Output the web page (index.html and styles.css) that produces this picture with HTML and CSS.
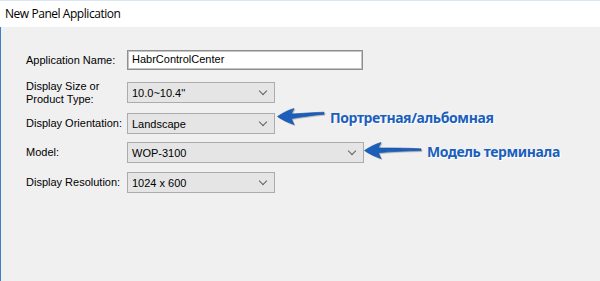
FILE: index.html
```html
<!DOCTYPE html>
<html>
<head>
<meta charset="utf-8">
<link rel="stylesheet" href="styles.css">
</head>
<body>
<div class="window">
  <div class="titlebar">New Panel Application</div>
  <div class="client">
    <div class="form">
      <div class="row r1">
        <div class="label">Application Name:</div>
        <div class="textbox">HabrControlCenter</div>
      </div>
      <div class="row r2">
        <div class="label">Display Size or<br>Product Type:</div>
        <div class="combo short"><span>10.0~10.4''</span><i class="chev"></i></div>
      </div>
      <div class="row r3">
        <div class="label">Display Orientation:</div>
        <div class="combo short"><span>Landscape</span><i class="chev"></i></div>
      </div>
      <div class="row r4">
        <div class="label">Model:</div>
        <div class="combo long"><span>WOP-3100</span><i class="chev"></i></div>
      </div>
      <div class="row r5">
        <div class="label">Display Resolution:</div>
        <div class="combo short"><span>1024 x 600</span><i class="chev"></i></div>
      </div>
    </div>

    <div class="note n1">
      <svg class="arrow" width="48" height="20" viewBox="0 0 48 20">
        <path d="M0.5 9.5 C5 6.5 11 3 17 1.5 C16 3.5 15 5 14.5 7 C24 6.5 36 5.5 47 5.2 L47 7.2 C36 8 24 10 14.5 11.5 C15 13.5 16 15.5 17 17.5 C11 15.5 5 12.5 0.5 9.5 Z"/>
      </svg>
      <span class="note-text">Портретная/альбомная</span>
    </div>
    <div class="note n2">
      <svg class="arrow" width="58" height="20" viewBox="0 0 58 20">
        <path d="M0.5 9.5 C5 6.5 11 3 17 1.5 C16 3.5 15 5 14.5 7 C26 7 42 7 57 7.8 L57 9.6 C42 10 26 10.5 14.5 11.8 C15 13.5 16 15.5 17 17.5 C11 15.5 5 12.5 0.5 9.5 Z"/>
      </svg>
      <span class="note-text">Модель терминала</span>
    </div>
  </div>
</div>
</body>
</html>
```
FILE: styles.css
```css
html, body {
  margin: 0;
  padding: 0;
}
body {
  width: 600px;
  height: 281px;
  overflow: hidden;
  background: #f0f0f0;
}
.window {
  position: relative;
  width: 600px;
  height: 281px;
  display: flex;
  flex-direction: column;
}
.titlebar {
  height: 26px;
  background: #fff;
  border-top: 1px solid #d9e6f3;
  font-family: "Open Sans", "Noto Sans", sans-serif;
  font-size: 12px;
  line-height: 26px;
  color: #000;
  padding-left: 5px;
  letter-spacing: -0.45px;
}
.client {
  position: relative;
  flex: 1;
  border-left: 1px solid #3b7fc4;
  background: #f0f0f0;
}
.form {
  padding-top: 23px;
  padding-left: 25px;
  display: flex;
  flex-direction: column;
  font-family: "Liberation Sans", Arial, sans-serif;
  font-size: 11px;
  color: #000;
}
.row {
  display: flex;
  align-items: center;
}
.label {
  width: 101px;
  line-height: 13px;
}
.r1 { height: 20px; }
.r2 { height: 21px; margin-top: 12px; }
.r3 { height: 21px; margin-top: 10px; }
.r4 { height: 21px; margin-top: 8px; }
.r5 { height: 21px; margin-top: 9px; }
.textbox {
  box-sizing: border-box;
  width: 236px;
  height: 20px;
  background: #fff;
  border: 1px solid #8f8f8f;
  box-shadow: inset 0 0 0 1px #c4c4c4;
  padding-left: 4px;
  line-height: 17px;
}
.combo {
  box-sizing: border-box;
  height: 21px;
  background: #e5e5e5;
  border: 1px solid #acacac;
  display: flex;
  align-items: center;
  justify-content: space-between;
  padding-left: 4px;
  padding-right: 6px;
}
.combo.short { width: 148px; }
.combo.long { width: 237px; }
.chev {
  display: block;
  width: 5px;
  height: 5px;
  border-right: 1px solid #606060;
  border-bottom: 1px solid #606060;
  transform: translateY(-2px) rotate(45deg);
  margin-right: 2px;
}
.note {
  position: absolute;
  display: flex;
  align-items: center;
}
.n1 { left: 276px; top: 80px; }
.n2 { left: 363px; top: 114px; }
.arrow {
  display: block;
  fill: #1b5fbd;
  stroke: #14489a;
  stroke-width: 0.6;
  filter: drop-shadow(1px 1px 0.5px rgba(0,0,0,0.25));
}
.note-text {
  font-family: "Noto Sans", "DejaVu Sans", sans-serif;
  font-weight: bold;
  font-size: 14px;
  letter-spacing: -0.4px;
  color: #1b5fbd;
  text-shadow: 1px 1px 0 #fff, 1px 1px 1px #fff;
  margin-left: 5px;
  white-space: nowrap;
}
```
